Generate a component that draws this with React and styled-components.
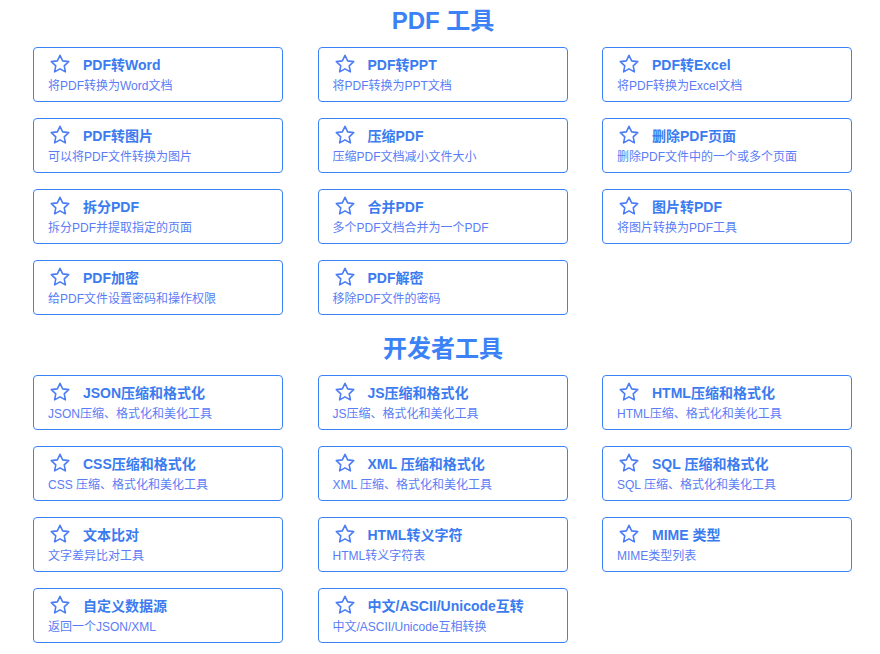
import React from "react";
import styled, { createGlobalStyle } from "styled-components";

const Global = createGlobalStyle`
  html, body { margin: 0; padding: 0; background: #fff; }
  body { font-family: "Liberation Sans", "Noto Sans CJK SC", sans-serif; }
`;

const Page = styled.div`
  width: 820px;
  padding: 4px 0 0 33px;
`;

const Section = styled.section`
  display: flex;
  flex-direction: column;
  margin-bottom: ${(p) => p.$mb || 0}px;
`;

const Heading = styled.h2`
  margin: 0 0 10px;
  height: 33px;
  line-height: 33px;
  text-align: center;
  font-size: 24px;
  font-weight: 700;
  color: #3b82f6;
`;

const Grid = styled.div`
  display: grid;
  grid-template-columns: repeat(3, 250px);
  column-gap: 34.5px;
  row-gap: 16px;
`;

const Card = styled.div`
  box-sizing: border-box;
  height: 55px;
  border: 1px solid #3b82f6;
  border-radius: 4px;
  padding: 5px 14px 0;
  display: flex;
  flex-direction: column;
`;

const TitleRow = styled.div`
  display: flex;
  align-items: center;
  gap: 12px;
  height: 22px;
  padding-left: 1px;
`;

const Title = styled.span`
  font-size: 14px;
  font-weight: 700;
  color: #3b7bf0;
`;

const Desc = styled.span`
  margin-top: 3px;
  font-size: 12px;
  line-height: 16px;
  color: #5a7cf6;
`;

const Star = () => (
  <svg width="22" height="22" viewBox="0 0 24 24" fill="none" stroke="#4b7cf5" strokeWidth="1.7" strokeLinejoin="round">
    <path d="M12 2.5l2.9 6.1 6.6.8-4.9 4.6 1.3 6.6L12 17.3l-5.9 3.3 1.3-6.6-4.9-4.6 6.6-.8z" />
  </svg>
);

const pdf = [
  ["PDF转Word", "将PDF转换为Word文档"],
  ["PDF转PPT", "将PDF转换为PPT文档"],
  ["PDF转Excel", "将PDF转换为Excel文档"],
  ["PDF转图片", "可以将PDF文件转换为图片"],
  ["压缩PDF", "压缩PDF文档减小文件大小"],
  ["删除PDF页面", "删除PDF文件中的一个或多个页面"],
  ["拆分PDF", "拆分PDF并提取指定的页面"],
  ["合并PDF", "多个PDF文档合并为一个PDF"],
  ["图片转PDF", "将图片转换为PDF工具"],
  ["PDF加密", "给PDF文件设置密码和操作权限"],
  ["PDF解密", "移除PDF文件的密码"],
];

const dev = [
  ["JSON压缩和格式化", "JSON压缩、格式化和美化工具"],
  ["JS压缩和格式化", "JS压缩、格式化和美化工具"],
  ["HTML压缩和格式化", "HTML压缩、格式化和美化工具"],
  ["CSS压缩和格式化", "CSS 压缩、格式化和美化工具"],
  ["XML 压缩和格式化", "XML 压缩、格式化和美化工具"],
  ["SQL 压缩和格式化", "SQL 压缩、格式化和美化工具"],
  ["文本比对", "文字差异比对工具"],
  ["HTML转义字符", "HTML转义字符表"],
  ["MIME 类型", "MIME类型列表"],
  ["自定义数据源", "返回一个JSON/XML"],
  ["中文/ASCII/Unicode互转", "中文/ASCII/Unicode互相转换"],
];

const Tools = ({ items }) => (
  <Grid>
    {items.map(([t, d]) => (
      <Card key={t}>
        <TitleRow>
          <Star />
          <Title>{t}</Title>
        </TitleRow>
        <Desc>{d}</Desc>
      </Card>
    ))}
  </Grid>
);

export default function App() {
  return (
    <>
      <Global />
      <Page>
        <Section $mb={17}>
          <Heading>PDF 工具</Heading>
          <Tools items={pdf} />
        </Section>
        <Section>
          <Heading>开发者工具</Heading>
          <Tools items={dev} />
        </Section>
      </Page>
    </>
  );
}
